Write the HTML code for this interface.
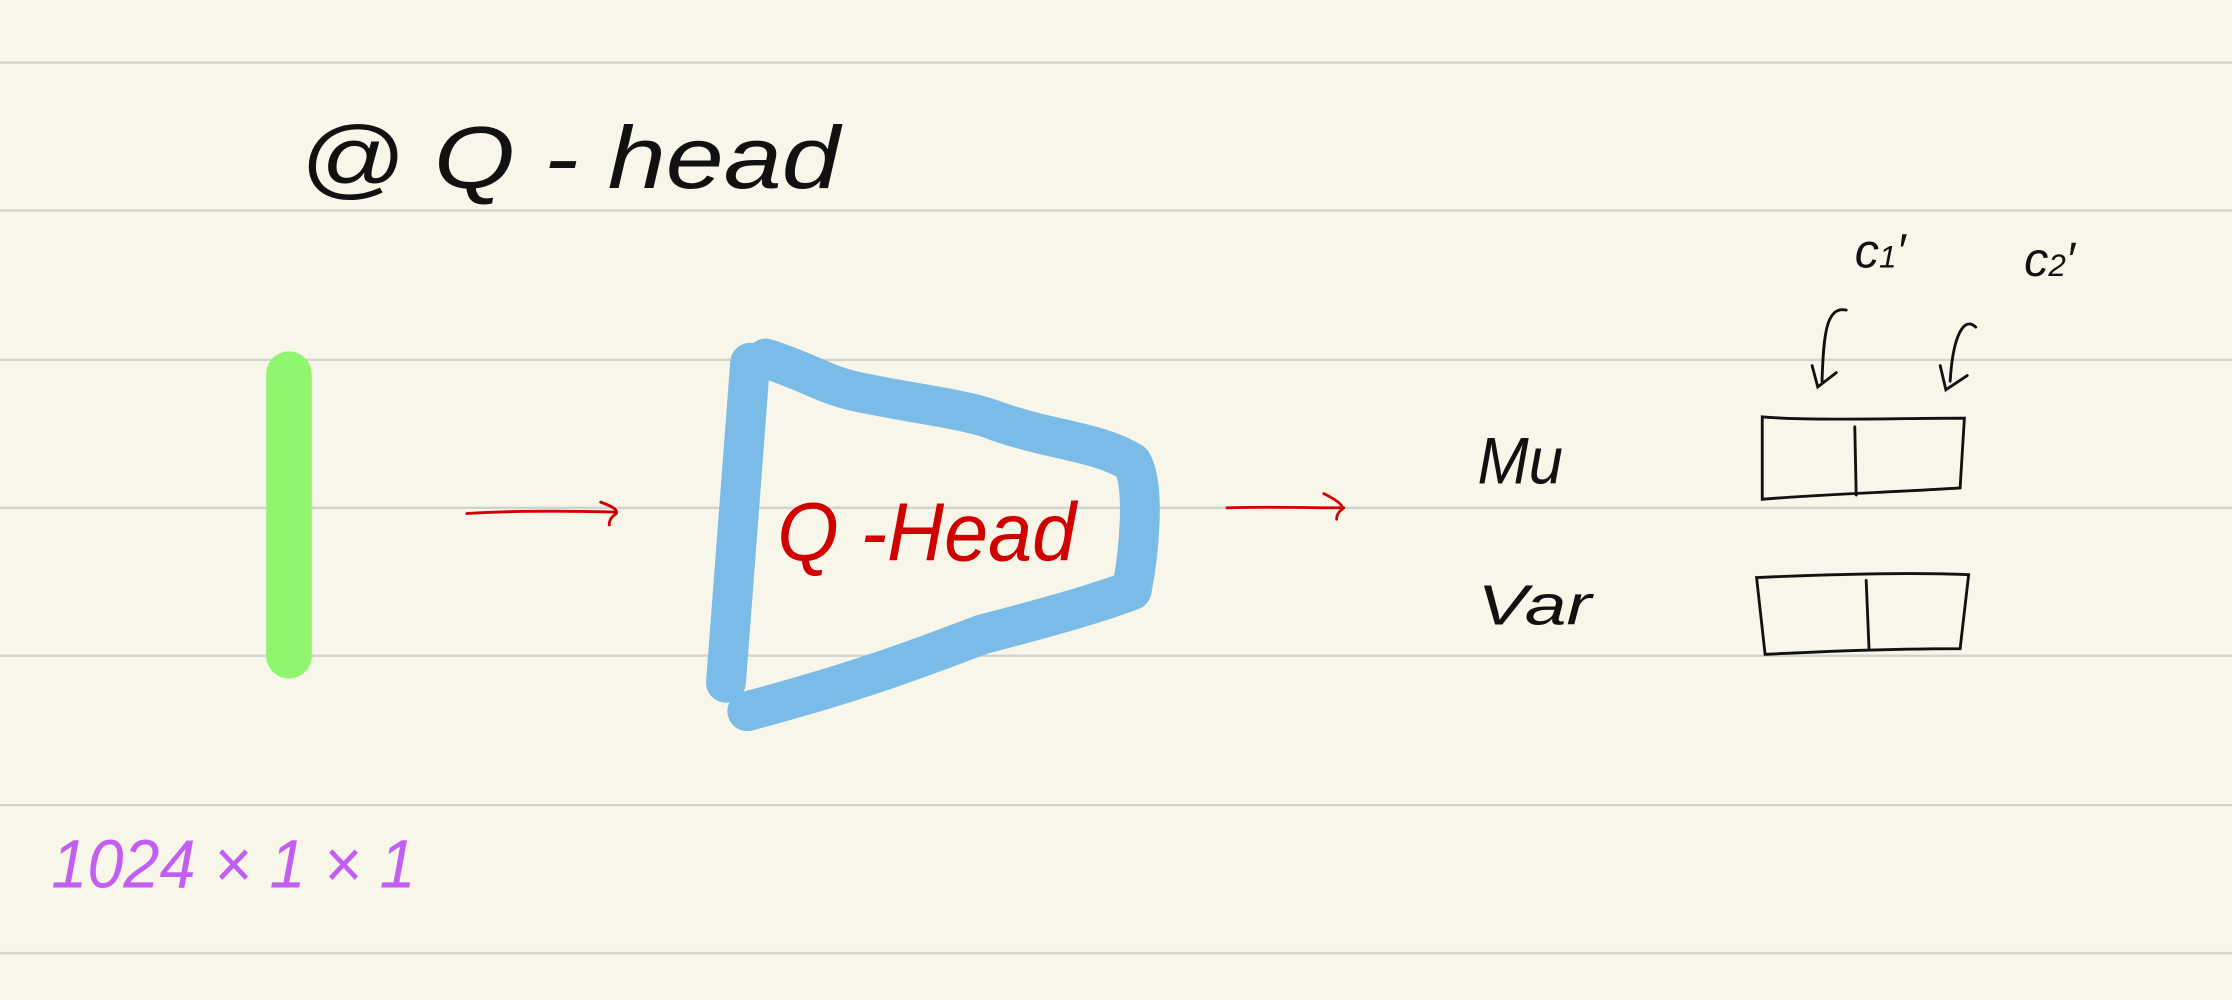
<!DOCTYPE html>
<html><head><meta charset="utf-8"><style>
html,body{margin:0;padding:0;background:#f8f6e9;}
svg{display:block;}
.h{font-family:"Liberation Sans","DejaVu Sans",sans-serif;font-style:italic;}
</style></head><body>
<svg width="2232" height="1000" viewBox="0 0 1568 703" preserveAspectRatio="none" xmlns="http://www.w3.org/2000/svg">
<rect width="1568" height="703" fill="#f8f6e9"/>
<g stroke="#d2d2cf" stroke-width="1.6">
<line x1="0" y1="44" x2="1568" y2="44"/>
<line x1="0" y1="148" x2="1568" y2="148"/>
<line x1="0" y1="253" x2="1568" y2="253"/>
<line x1="0" y1="357" x2="1568" y2="357"/>
<line x1="0" y1="461" x2="1568" y2="461"/>
<line x1="0" y1="566" x2="1568" y2="566"/>
<line x1="0" y1="670" x2="1568" y2="670"/>
</g>
<!-- title -->
<text x="210" y="132" class="h" font-size="62" fill="#111" textLength="380" lengthAdjust="spacingAndGlyphs">@ Q - head</text>
<!-- green bar -->
<line x1="203" y1="263" x2="203" y2="461" stroke="#90f56f" stroke-width="32" stroke-linecap="round"/>
<!-- blue trapezoid -->
<path d="M538,252 C570,262 580,272 610,277 C650,285 680,288 700,296 C740,310 770,310 795,325 C805,340 800,390 795,415 C760,428 720,438 690,446 C640,465 600,480 525,500 M527,255 L510,480"
 fill="none" stroke="#7bbbe8" stroke-width="28" stroke-linecap="round" stroke-linejoin="round"/>
<!-- red arrows -->
<g stroke="#d10000" stroke-width="2" fill="none" stroke-linecap="round">
<path d="M328,361 C360,359 395,359 432,360"/>
<path d="M422,353 C430,356 434,358 433,361 C430,363 428,365 428,369"/>
<path d="M862,357 C890,356 915,357 944,357"/>
<path d="M930,347 C938,351 944,355 943,358 C940,360 939,362 939,365"/>
</g>
<text x="546" y="394" class="h" font-size="58" fill="#d10000" textLength="210" lengthAdjust="spacingAndGlyphs">Q -Head</text>
<!-- Mu / Var -->
<text x="1038" y="340" class="h" font-size="46" fill="#111" textLength="60" lengthAdjust="spacingAndGlyphs">Mu</text>
<text x="1038" y="439" class="h" font-size="40" fill="#111" textLength="80" lengthAdjust="spacingAndGlyphs">Var</text>
<!-- boxes -->
<g stroke="#111" stroke-width="2" fill="none" stroke-linecap="round">
<path d="M1238,293 C1270,296 1330,294 1380,294 L1377,343 C1330,346 1270,348 1238,351 Z"/>
<path d="M1303,300 L1304,348"/>
<path d="M1234,406 C1280,404 1340,402 1383,404 L1377,456 C1330,456 1280,458 1240,460 Z"/>
<path d="M1311,408 L1313,456"/>
<path d="M1297,218 C1283,215 1281,235 1280,268 M1273,257 L1277,272 L1290,262"/>
<path d="M1388,230 C1380,222 1372,235 1370,268 M1363,257 L1367,274 L1382,264"/>
</g>
<text x="1303" y="188" class="h" font-size="34" fill="#111">c<tspan font-size="22">1</tspan>′</text>
<text x="1422" y="194" class="h" font-size="34" fill="#111">c<tspan font-size="22">2</tspan>′</text>
<!-- purple dims -->
<text x="36" y="624" class="h" font-size="48" fill="#c25ff2" textLength="256" lengthAdjust="spacingAndGlyphs">1024 × 1 × 1</text>
</svg>
</body></html>
